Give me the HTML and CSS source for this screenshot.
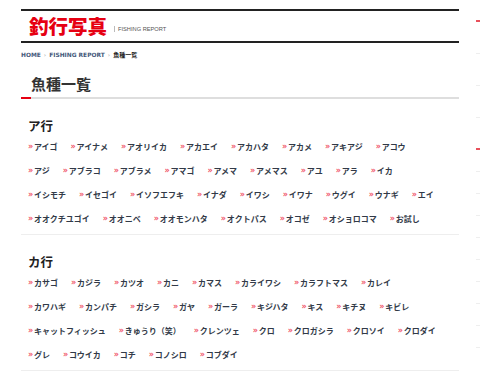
FILE: index.html
```html
<!DOCTYPE html>
<html lang="ja">
<head>
<meta charset="utf-8">
<title>魚種一覧 | 釣行写真</title>
<link rel="stylesheet" href="styles.css">
</head>
<body>
<div class="page">
  <main class="main">
    <header class="site-header">
      <span class="logo">釣行写真</span>
      <span class="tagline">FISHING REPORT</span>
    </header>
    <nav class="crumbs">
      <a class="crumb" href="#">HOME</a><span class="sep">›</span><a class="crumb" href="#">FISHING REPORT</a><span class="sep">›</span><span class="crumb-current">魚種一覧</span>
    </nav>
    <h1 class="page-title">魚種一覧</h1>

    <section class="group">
      <h2 class="group-title">ア行</h2>
      <ul class="fish-list">
        <li><a href="#">アイゴ</a></li>
        <li><a href="#">アイナメ</a></li>
        <li><a href="#">アオリイカ</a></li>
        <li><a href="#">アカエイ</a></li>
        <li><a href="#">アカハタ</a></li>
        <li><a href="#">アカメ</a></li>
        <li><a href="#">アキアジ</a></li>
        <li><a href="#">アコウ</a></li>
        <li><a href="#">アジ</a></li>
        <li><a href="#">アブラコ</a></li>
        <li><a href="#">アブラメ</a></li>
        <li><a href="#">アマゴ</a></li>
        <li><a href="#">アメマ</a></li>
        <li><a href="#">アメマス</a></li>
        <li><a href="#">アユ</a></li>
        <li><a href="#">アラ</a></li>
        <li><a href="#">イカ</a></li>
        <li><a href="#">イシモチ</a></li>
        <li><a href="#">イセゴイ</a></li>
        <li><a href="#">イソフエフキ</a></li>
        <li><a href="#">イナダ</a></li>
        <li><a href="#">イワシ</a></li>
        <li><a href="#">イワナ</a></li>
        <li><a href="#">ウグイ</a></li>
        <li><a href="#">ウナギ</a></li>
        <li><a href="#">エイ</a></li>
        <li><a href="#">オオクチユゴイ</a></li>
        <li><a href="#">オオニベ</a></li>
        <li><a href="#">オオモンハタ</a></li>
        <li><a href="#">オクトパス</a></li>
        <li><a href="#">オコゼ</a></li>
        <li><a href="#">オショロコマ</a></li>
        <li><a href="#">お試し</a></li>
      </ul>
    </section>

    <section class="group">
      <h2 class="group-title">カ行</h2>
      <ul class="fish-list">
        <li><a href="#">カサゴ</a></li>
        <li><a href="#">カジラ</a></li>
        <li><a href="#">カツオ</a></li>
        <li><a href="#">カニ</a></li>
        <li><a href="#">カマス</a></li>
        <li><a href="#">カライワシ</a></li>
        <li><a href="#">カラフトマス</a></li>
        <li><a href="#">カレイ</a></li>
        <li><a href="#">カワハギ</a></li>
        <li><a href="#">カンパチ</a></li>
        <li><a href="#">ガシラ</a></li>
        <li><a href="#">ガヤ</a></li>
        <li><a href="#">ガーラ</a></li>
        <li><a href="#">キジハタ</a></li>
        <li><a href="#">キス</a></li>
        <li><a href="#">キチヌ</a></li>
        <li><a href="#">キビレ</a></li>
        <li><a href="#">キャットフィッシュ</a></li>
        <li><a href="#">きゅうり（笑）</a></li>
        <li><a href="#">クレンツェ</a></li>
        <li><a href="#">クロ</a></li>
        <li><a href="#">クロガシラ</a></li>
        <li><a href="#">クロソイ</a></li>
        <li><a href="#">クロダイ</a></li>
        <li><a href="#">グレ</a></li>
        <li><a href="#">コウイカ</a></li>
        <li><a href="#">コチ</a></li>
        <li><a href="#">コノシロ</a></li>
        <li><a href="#">コブダイ</a></li>
      </ul>
    </section>
  </main>

  <aside class="sidebar">
    <div class="side-head"></div>
    <ul class="side-list tall">
      <li></li><li></li><li></li>
    </ul>
    <div class="side-head second"></div>
    <ul class="side-list">
      <li></li><li></li><li></li><li></li><li></li><li></li><li></li><li></li><li></li>
    </ul>
  </aside>
</div>
</body>
</html>
```

FILE: styles.css
```css
html, body {
  margin: 0;
  padding: 0;
  background: #fff;
  overflow: hidden;
}

body {
  font-family: "Noto Sans CJK JP", "Noto Sans", sans-serif;
  color: #333;
}

.page {
  display: flex;
  gap: 17px;
  padding-left: 21px;
  width: 480px;
  box-sizing: border-box;
}

.main {
  width: 438px;
  flex: none;
}

/* header */
.site-header {
  margin-top: 9px;
  height: 30px;
  border-top: 2px solid #222;
  border-bottom: 2px solid #222;
  display: flex;
  align-items: center;
  padding-left: 8px;
}

.logo {
  font-family: "Noto Sans CJK JP", sans-serif;
  font-weight: 900;
  font-size: 19.5px;
  line-height: 22px;
  color: #e60012;
}

.tagline {
  margin-left: 7px;
  margin-top: 5px;
  padding-left: 3px;
  border-left: 1px solid #bbb;
  font-family: "Liberation Sans", sans-serif;
  font-size: 5.7px;
  line-height: 6px;
  color: #555;
}

/* breadcrumbs */
.crumbs {
  margin-top: 8px;
  font-family: "DejaVu Sans", sans-serif;
  font-weight: bold;
  font-size: 5.9px;
  line-height: 8px;
  display: flex;
  align-items: center;
}

.crumb {
  color: #44587a;
  text-decoration: none;
}

.sep {
  color: #aaa;
  margin: 0 3px;
  font-weight: normal;
}

.crumb-current {
  font-family: "Noto Sans CJK JP", sans-serif;
  color: #222;
  font-size: 6px;
}

/* page title */
.page-title {
  margin: 15px 0 0;
  padding: 0 0 5px 10px;
  font-size: 15px;
  line-height: 20px;
  font-weight: bold;
  color: #333;
  background: linear-gradient(to right, #e60012 10px, #dedede 10px) left bottom / 100% 2px no-repeat;
}

/* groups */
.group {
  margin-top: 19px;
  padding: 0 0 3px 7px;
  border-bottom: 1px solid #eee;
}

.group-title {
  margin: 0 0 1px;
  font-size: 12.5px;
  line-height: 16px;
  font-weight: bold;
  color: #222;
}

.fish-list {
  list-style: none;
  margin: 0;
  padding: 0 6px 0 0;
  display: flex;
  flex-wrap: wrap;
}

.fish-list li {
  height: 24px;
  display: flex;
  align-items: center;
  margin-right: 13px;
  font-size: 8px;
  line-height: 10px;
  font-weight: bold;
}

.fish-list li::before {
  content: "»";
  display: inline-block;
  width: 6px;
  font-family: "DejaVu Sans", sans-serif;
  font-weight: bold;
  font-size: 8px;
  line-height: 10px;
  color: #f0566a;
}

.fish-list a {
  color: #323a48;
  text-decoration: none;
}

/* sidebar */
.sidebar {
  flex: 1;
  min-width: 0;
  overflow: hidden;
}

.side-head {
  margin-top: 20px;
  height: 2px;
  background: linear-gradient(to right, #e8505b 10px, #eee 10px);
}

.side-head.second {
  margin-top: 30px;
}

.side-list {
  list-style: none;
  margin: 0;
  padding: 0;
}

.side-list li {
  height: 21px;
  border-bottom: 1px solid #eee;
}

.side-list.tall li {
  height: 31px;
}
```
